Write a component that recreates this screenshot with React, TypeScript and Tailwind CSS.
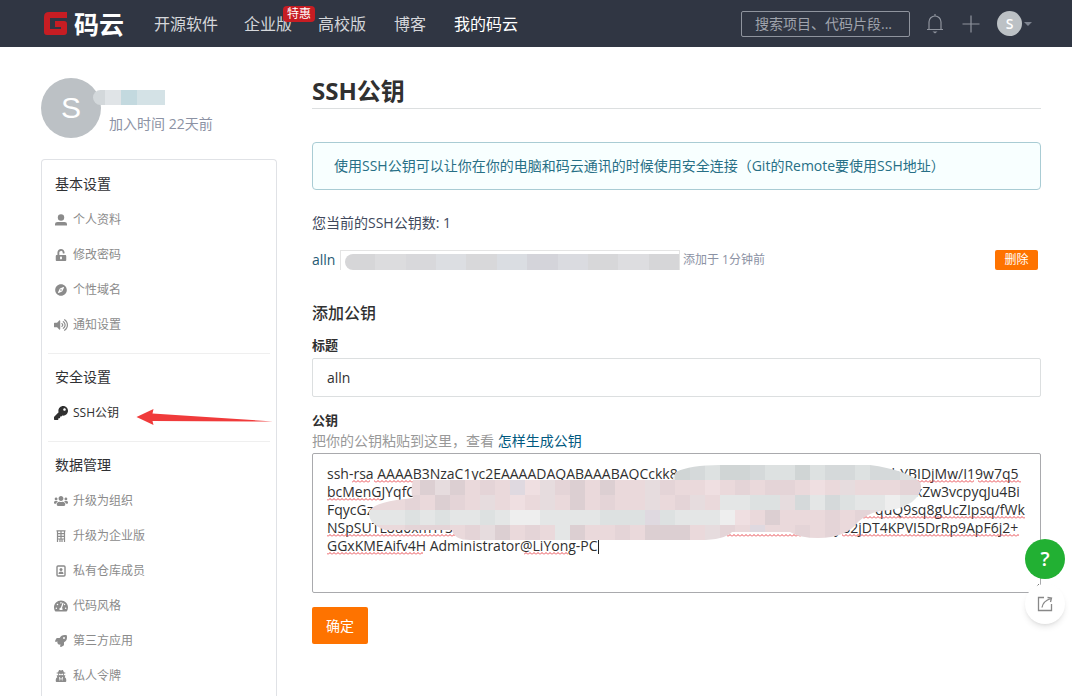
import type { ReactNode } from "react"
import { FaCompass, FaKey, FaRocket, FaTachometerAlt, FaUnlockAlt, FaUsers, FaUserSecret, FaVolumeUp } from "react-icons/fa"

type MenuItem = { label: string; icon: ReactNode; active?: boolean }
type MenuGroup = { title: string; items: MenuItem[] }

const PersonIcon = () => (
  <svg viewBox="0 0 12 12" className="size-3 shrink-0" fill="currentColor">
    <circle cx="6" cy="3.5" r="3.2" />
    <path d="M0 11.5V10Q0 8 2.5 8h7Q12 8 12 10v1.5z" />
  </svg>
)

const BuildingIcon = () => (
  <svg viewBox="0 0 10 12" className="h-3 w-2.5 shrink-0" fill="none" stroke="currentColor" strokeWidth="1.2">
    <path d="M1.5 12V1h7v11M0.5 0.8h9M5 1v8M1.5 3.7h7M1.5 6.3h7M1.5 9h7M4 9v3M6 9v3" />
  </svg>
)

const MemberIcon = () => (
  <svg viewBox="0 0 10 12" className="h-3 w-2.5 shrink-0" fill="none" stroke="currentColor" strokeWidth="1.4">
    <rect x="1" y="1" width="8" height="10" rx="1" />
    <circle cx="5" cy="4.6" r="1.5" fill="currentColor" stroke="none" />
    <path d="M2.5 9c0-3.2 5-3.2 5 0z" fill="currentColor" stroke="none" />
  </svg>
)

const groups: MenuGroup[] = [
  {
    title: "基本设置",
    items: [
      { label: "个人资料", icon: <PersonIcon /> },
      { label: "修改密码", icon: <FaUnlockAlt className="size-3 shrink-0" /> },
      { label: "个性域名", icon: <FaCompass className="size-3 shrink-0" /> },
      { label: "通知设置", icon: <FaVolumeUp className="size-3.5 shrink-0" /> },
    ],
  },
  {
    title: "安全设置",
    items: [{ label: "SSH公钥", icon: <FaKey className="size-3.5 shrink-0" />, active: true }],
  },
  {
    title: "数据管理",
    items: [
      { label: "升级为组织", icon: <FaUsers className="size-3.5 shrink-0" /> },
      { label: "升级为企业版", icon: <BuildingIcon /> },
      { label: "私有仓库成员", icon: <MemberIcon /> },
      { label: "代码风格", icon: <FaTachometerAlt className="size-3.5 shrink-0" /> },
      { label: "第三方应用", icon: <FaRocket className="size-3 shrink-0" /> },
      { label: "私人令牌", icon: <FaUserSecret className="size-3 shrink-0" /> },
    ],
  },
]

// the middle of each line is redacted, so it is padded with blanks
const keyText = [
  "ssh-rsa AAAAB3NzaC1yc2EAAAADAQABAAABAQCckk8z" + " ".repeat(57) + "hYBIDjMw/I19w7q5",
  "bcMenGJYqfC" + " ".repeat(126) + "r/" + " ".repeat(6) + "AxZw3vcpyqJu4Bi",
  "FqycGz" + " ".repeat(138) + "quQ9sq8gUcZIpsq/fWk",
  "NSpSUTL8u0xmYrSck" + " ".repeat(101) + "yB2jDT4KPVI5DrRp9ApF6j2+",
  "GGxKMEAifv4H Administrator@LiYong-PC",
].join("\n")

const squiggles = [
  [40, 30, 18], [62, 30, 272], [335, 30, 12], [525, 32, 22], [596, 30, 66], [666, 30, 43],
  [15, 48, 54], [548, 48, 20],
  [400, 66, 8], [548, 66, 165],
  [15, 84, 128], [415, 84, 75], [530, 84, 177],
  [15, 102, 96], [212, 102, 44],
]

const swatches: Record<string, string> = {
  a: "#ead9db", b: "#e4d4d7", c: "#e6dcde", d: "#dccfd2", e: "#e4e6e6", f: "#dde1e1",
  g: "#d5d9da", h: "#efdfe1", i: "#dfd9e0", j: "#d0d5d5", k: "#eeeeee",
}

const mosaicRows = [
  "eeeeeeeeeeeeeeeeeeeeejgfjjgffjfggfggfjjg",
  "aaaadcdabaihcbdadaacbaahababbahacaaabbaa",
  "aaabadbacahacadabaacabcaeeffcgegfeekeeef",
  "eeefefeefekkeeeefffifeeekhadaaababcaabcc",
  "aaabbbabcdabaedaabadddacbaiaababaddbabaa",
]

function Mosaic() {
  return (
    <svg className="pointer-events-none absolute top-0 left-0" width="729" height="140" viewBox="312 453 729 140" aria-hidden="true">
      <defs>
        <clipPath id="brush">
          <path d="M676 472Q690 465 720 465H870Q906 470 920 482Q924 492 912 502Q898 511 880 511Q866 514 858 522Q846 538 818 538Q800 538 790 532H732Q724 540 700 540H470Q454 540 452 530H385Q368 524 369 512Q372 502 413 498Q410 492 413 480H672Z" />
        </clipPath>
        <pattern id="wave" width="4" height="3" patternUnits="userSpaceOnUse">
          <path d="M0 2.5L2 0.5L4 2.5" fill="none" stroke="#e8494f" strokeWidth="1" />
        </pattern>
      </defs>
      <g transform="translate(312 453)">
        {squiggles.map(([x, y, w]) => (
          <rect key={`${x}-${y}`} x={x} y={y - 3} width={w} height="3" fill="url(#wave)" />
        ))}
      </g>
      <g clipPath="url(#brush)" shapeRendering="crispEdges">
        {mosaicRows.map((row, r) =>
          row.split("").map((cell, c) => (
            <rect key={`${r}-${c}`} x={360 + c * 15} y={465 + r * 15} width="15" height="15" fill={swatches[cell]} />
          )),
        )}
      </g>
      <path d="M598.5 540V554" stroke="#222" />
      <path d="M1033 590L1039 584" stroke="#777" />
    </svg>
  )
}

function Header() {
  return (
    <header className="flex h-[47px] items-center bg-[#303643] pr-10 pl-[43px]">
      <a href="#" className="flex items-center gap-1.5 text-[25px] leading-6 font-bold text-white">
        <svg viewBox="0 0 25 24" className="h-6 w-[25px]" fill="none" stroke="#c71d23" strokeWidth="6">
          <path d="M24 3H6Q4 3 4 5V20H21V12H12" strokeLinejoin="round" />
        </svg>
        码云
      </a>
      <nav className="ml-[30px] flex flex-1 gap-7 text-base leading-6 whitespace-nowrap text-[#d5d7db]">
        <div className="flex gap-[26px]">
          <a href="#">开源软件</a>
          <a href="#" className="relative">
            企业版
            <span className="absolute -top-1.5 left-[39px] rounded-sm bg-[#c71d23] px-1 text-xs leading-4 text-white">特惠</span>
          </a>
          <a href="#">高校版</a>
        </div>
        <a href="#">博客</a>
        <a href="#" className="text-white">我的码云</a>
      </nav>
      <input
        type="text"
        aria-label="搜索"
        placeholder="搜索项目、代码片段..."
        className="h-[26px] w-[169px] rounded-xs border border-[#8f949e] px-[13px] text-sm placeholder:text-[#a0a4ad]"
      />
      <button type="button" aria-label="通知" className="ml-4 text-[#8f949e]">
        <svg viewBox="0 0 18 22" className="h-[22px] w-[18px]" fill="none" stroke="currentColor" strokeWidth="1.2">
          <path d="M1 16.5H17M3 16.5V9a6 6 0 0 1 12 0v7.5M9 3V1" />
          <path d="M6.5 18.5h5L9 20.5z" fill="currentColor" stroke="none" />
        </svg>
      </button>
      <button type="button" aria-label="新建" className="ml-[18px] text-[#8f949e]">
        <svg viewBox="0 0 18 18" className="size-[18px]" stroke="currentColor" strokeWidth="1.2">
          <path d="M9 0.5v17M0.5 9h17" />
        </svg>
      </button>
      <button type="button" aria-label="账户" className="ml-[17px] flex items-center gap-0.5">
        <span className="flex size-[25px] items-center justify-center rounded-full bg-[#bcc1c5] text-sm font-semibold text-white">S</span>
        <span className="border-x-4 border-t-4 border-x-transparent border-t-[#7c828e]" />
      </button>
    </header>
  )
}

function Sidebar() {
  return (
    <aside className="flex w-[236px] shrink-0 flex-col">
      <div className="flex">
        <div className="flex size-[60px] items-center justify-center rounded-full bg-[#bcc1c5] font-['Liberation_Sans'] text-3xl text-white">
          <span>S</span>
        </div>
        <div className="relative flex-1 pt-3">
          <div className="-ml-2 flex h-[15px] w-[72px] overflow-hidden rounded-l-full">
            <span className="w-3 bg-[#d3d8db]" />
            <span className="w-4 bg-[#e0e4e7]" />
            <span className="w-4 bg-[#c3d9df]" />
            <span className="flex-1 bg-[#d4e2e6]" />
          </div>
          <p className="mt-[7px] ml-2 text-sm leading-6 text-[#8c92a4]">加入时间 22天前</p>
        </div>
      </div>
      <nav className="mt-[21px] flex-1 rounded-t-sm border border-b-0 border-[#e0e2e6] pt-px">
        {groups.map((group, i) => (
          <section key={group.title}>
            {i > 0 && <hr className="mx-1.5 border-[#efefef]" />}
            <div className={i < groups.length - 1 ? "px-[13px] pt-1 pb-[11px]" : "px-[13px] pt-1"}>
              <h2 className="text-sm leading-[37px] text-[#2f3033]">{group.title}</h2>
              <ul>
                {group.items.map((item) => (
                  <li key={item.label}>
                    <a
                      href="#"
                      className={`flex h-[35px] items-center gap-1.5 text-xs ${item.active ? "text-[#303030]" : "text-[#8b8b8b]"}`}
                    >
                      <span className="flex w-3 justify-center">{item.icon}</span>
                      {item.label}
                    </a>
                  </li>
                ))}
              </ul>
            </div>
          </section>
        ))}
      </nav>
    </aside>
  )
}

const keyBlocks = ["#d6d6d8", "#dcdcde", "#d8d8db", "#dcdee2", "#d8d8da", "#dadde2", "#d4d4da", "#dadbe0", "#d7d7d9", "#dddde0", "#d6d6d8"]

export default function App() {
  return (
    <div className="flex min-h-screen flex-col bg-white font-['Open_Sans','Noto_Sans_CJK_SC',sans-serif] text-sm text-[#40485b]">
      <Header />
      <div className="relative flex flex-1 gap-[35px] pt-[31px] pr-[31px] pl-[41px]">
        <Sidebar />
        <main className="min-w-0 flex-1">
          <h1 className="border-b border-[#dcdfe0] pb-1 text-2xl leading-[26px] font-bold text-[#303030]">SSH公钥</h1>
          <div className="mt-[33px] rounded-sm border border-[#a9ccd4] bg-[#f8ffff] px-[21px] py-3 leading-[22px] text-[#276f86]">
            使用SSH公钥可以让你在你的电脑和码云通讯的时候使用安全连接（Git的Remote要使用SSH地址）
          </div>
          <p className="mt-[21px] leading-6">您当前的SSH公钥数: 1</p>
          <div className="mt-[15px] flex h-5 items-center">
            <a href="#" className="w-7 text-[#1f5a73]">alln</a>
            <div className="flex h-5 w-[340px] items-end border border-b-0 border-[#e4e4e4] pl-1">
              <div className="flex h-4 flex-1 overflow-hidden rounded-l-lg">
                {keyBlocks.map((color, i) => (
                  <span key={i} className="flex-1" style={{ backgroundColor: color }} />
                ))}
              </div>
            </div>
            <span className="ml-[3px] flex-1 text-xs text-[#8c92a4]">添加于 1分钟前</span>
            <button type="button" className="mr-[3px] h-5 w-[43px] rounded-xs bg-[#fe7300] text-xs text-white">删除</button>
          </div>
          <form onSubmit={(e) => e.preventDefault()}>
            <h2 className="mt-[31px] text-base leading-6 font-medium text-[#303030]">添加公钥</h2>
            <label htmlFor="title" className="mt-2.5 block text-[13px] leading-5 font-semibold text-[#303030]">标题</label>
            <input
              id="title"
              defaultValue="alln"
              className="mt-[3px] block h-[39px] w-full rounded-xs border border-[#dcdfe0] px-3.5 text-[#303030]"
            />
            <label htmlFor="key" className="mt-[13px] block text-[13px] leading-5 font-semibold text-[#303030]">公钥</label>
            <p className="leading-[22px] text-[#999]">
              把你的公钥粘贴到这里，查看 <a href="#" className="text-[#005980]">怎样生成公钥</a>
            </p>
            <div className="relative mt-px">
              <textarea
                id="key"
                defaultValue={keyText}
                spellCheck={false}
                className="block h-[140px] w-full resize-none overflow-hidden rounded-xs border border-[#a9aaad] px-3.5 py-[11px] text-sm leading-[18px] whitespace-pre text-[#303030]"
              />
              <Mosaic />
            </div>
            <button type="submit" className="mt-3.5 h-[37px] w-14 rounded-xs bg-[#fe7300] text-white">确定</button>
          </form>
        </main>
        <svg className="pointer-events-none absolute top-[361px] left-[136px]" width="138" height="18" viewBox="0 0 138 18" aria-hidden="true">
          <path d="M0.5 9L17.5 1L16.5 5.5L137 13.5L16.5 13L17.5 17Z" fill="#f03b3b" />
        </svg>
      </div>
      <div className="fixed right-[7px] bottom-[72px] flex flex-col gap-[5px]">
        <button type="button" aria-label="帮助" className="size-10 rounded-full bg-[#22b033] text-xl font-semibold text-white">?</button>
        <button type="button" aria-label="分享" className="flex size-10 items-center justify-center rounded-full bg-white text-[#888] shadow-md">
          <svg viewBox="0 0 16 16" className="size-4" fill="none" stroke="currentColor" strokeWidth="1.3">
            <path d="M7 1.5H1.5V14.5H14.5V8M5 11.5Q6 5 14 2.5M10.5 1.5L14.5 2L13.5 6" />
          </svg>
        </button>
      </div>
    </div>
  )
}
